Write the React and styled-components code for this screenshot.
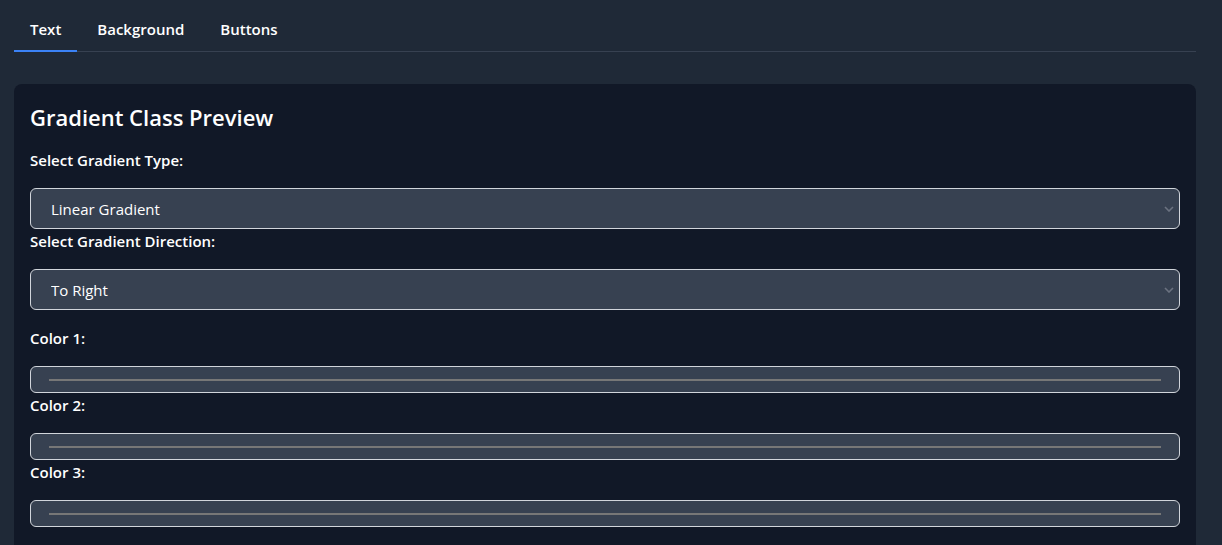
import React, { useState } from 'react';
import styled, { createGlobalStyle } from 'styled-components';

const GlobalStyle = createGlobalStyle`
  html, body {
    margin: 0;
    background: #1f2937;
    color: #ffffff;
    font-family: "Open Sans", "Noto Sans", "Liberation Sans", sans-serif;
  }
  * { box-sizing: border-box; }
`

const Page = styled.div`
  padding: 9px 26px 0 14px;
  min-height: 545px;
`

const TabBar = styled.div`
  display: flex;
  gap: 4px;
  border-bottom: 1px solid #374151;
`

const Tab = styled.button`
  background: none;
  border: none;
  border-bottom: 2px solid ${p => (p.active ? '#3b82f6' : 'transparent')};
  margin-bottom: -1px;
  padding: 9px 16px 10px;
  color: #ffffff;
  font-family: inherit;
  font-size: 15px;
  font-weight: 600;
  line-height: 22px;
  cursor: pointer;
`

const Card = styled.section`
  margin-top: 32px;
  background: #111827;
  border-radius: 8px;
  padding: 17px 16px 32px;
`

const Title = styled.h2`
  margin: 0 0 15px;
  font-size: 22px;
  font-weight: 600;
  line-height: 32px;
`

const Label = styled.label`
  display: block;
  font-size: 15px;
  font-weight: 600;
  line-height: 24px;
  margin-bottom: 16px;
`

const SelectWrap = styled.div`
  position: relative;
  margin-bottom: ${p => p.$gap || 0}px;
`

const Select = styled.select`
  appearance: none;
  width: 100%;
  height: 41px;
  padding: 0 20px;
  background: #374151;
  color: #ffffff;
  border: 1px solid #d1d5db;
  border-radius: 6px;
  font-family: inherit;
  font-size: 15px;
  outline: none;
`

const Chevron = styled.svg`
  position: absolute;
  right: 6px;
  top: 50%;
  transform: translateY(-50%);
  pointer-events: none;
`

const ColorField = styled.div`
  height: 27px;
  background: #374151;
  border: 1px solid #d1d5db;
  border-radius: 6px;
  padding: 0 18px;
  display: flex;
  align-items: center;
`

const Swatch = styled.div`
  flex: 1;
  height: 2px;
  background: ${p => p.$color};
`

function Dropdown({ value, options, gap, onChange }) {
  return (
    <SelectWrap $gap={gap}>
      <Select value={value} onChange={e => onChange(e.target.value)}>
        {options.map(o => <option key={o}>{o}</option>)}
      </Select>
      <Chevron width="10" height="6" viewBox="0 0 10 6">
        <path d="M1 1l4 4 4-4" fill="none" stroke="#6b7280" strokeWidth="1.6" />
      </Chevron>
    </SelectWrap>
  );
}

export default function App() {
  const [tab, setTab] = useState('Text');
  const [type, setType] = useState('Linear Gradient');
  const [dir, setDir] = useState('To Right');
  const colors = ['#777777', '#777777', '#777777'];

  return (
    <>
      <GlobalStyle />
      <Page>
        <TabBar>
          {['Text', 'Background', 'Buttons'].map(t => (
            <Tab key={t} active={tab === t} onClick={() => setTab(t)}>{t}</Tab>
          ))}
        </TabBar>
        <Card>
          <Title>Gradient Class Preview</Title>
          <Label>Select Gradient Type:</Label>
          <Dropdown value={type} onChange={setType} options={['Linear Gradient', 'Radial Gradient', 'Conic Gradient']} />
          <Label>Select Gradient Direction:</Label>
          <Dropdown value={dir} onChange={setDir} gap={16} options={['To Right', 'To Left', 'To Top', 'To Bottom']} />
          {colors.map((c, i) => (
            <React.Fragment key={i}>
              <Label>Color {i + 1}:</Label>
              <ColorField><Swatch $color={c} /></ColorField>
            </React.Fragment>
          ))}
        </Card>
      </Page>
    </>
  );
}
